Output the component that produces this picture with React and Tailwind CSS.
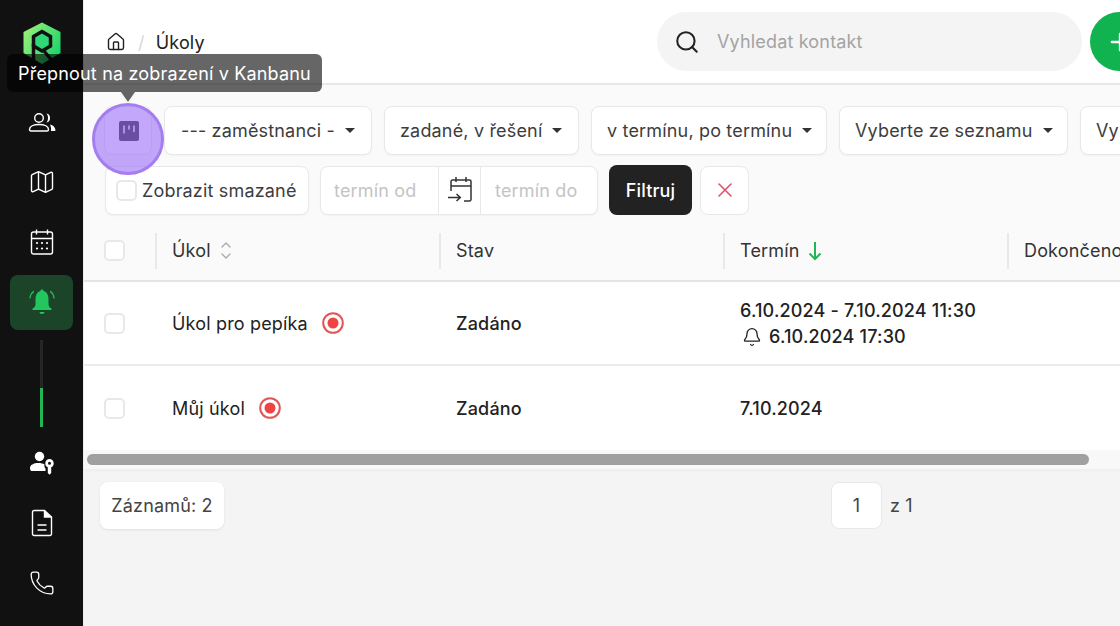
import React from 'react';
import { ChevronDown, ChevronUp, X, Search, Map as MapIcon, Phone, Bell, House, Plus } from 'lucide-react';

const Slot = ({ children }) => <div className="h-[60px] flex items-center justify-center text-white shrink-0">{children}</div>;

const Logo = () => (
  <svg width="38" height="44" viewBox="0 0 38 44">
    <defs>
      <linearGradient id="lg" x1="0" y1="0" x2="1" y2="0.6">
        <stop offset="0" stopColor="#a8f27a" />
        <stop offset="1" stopColor="#22d56c" />
      </linearGradient>
    </defs>
    <path d="M19 0.500 L37.500 10 V31 L19 42 L.5 31 V10 Z" fill="url(#lg)" />
    <path d="M19 9.500 L27.500 14.500 V24 L19 29 L10.500 24 V14.500 Z" fill="#2ed877" stroke="#111" strokeWidth="3.500" />
    <path d="M10.500 22 V44 M21 29 L31 41" stroke="#111" strokeWidth="3.500" fill="none" />
  </svg>
);

const UsersIcon = () => (
  <svg width="28" height="24" viewBox="0 0 28 24" fill="none" stroke="currentColor" strokeWidth="1.400">
    <circle cx="11" cy="8" r="4.300" />
    <path d="M1.500 19.500c0-3 4-5 9.500-5s9.500 2 9.500 5c0 1-.5 1.500-1.500 1.500H3c-1 0-1.500-.5-1.500-1.500Z" />
    <path d="M18.500 3.500c2.500.3 3.500 2.200 3.500 4.500s-1 4.200-3.500 4.500c1-1 1.500-2.800 1.500-4.500s-.5-3.500-1.500-4.500Z" fill="currentColor" stroke="none" />
    <path d="M22 14.500c3 .5 5 2.500 5.500 5.500 0 .7-.4 1-1 1h-3.500c.3-2.500-.2-4.500-1-6.500Z" fill="currentColor" stroke="none" />
  </svg>
);

const CalendarIcon = () => (
  <svg width="24" height="28" viewBox="0 0 24 28" fill="none" stroke="currentColor" strokeWidth="1.400">
    <rect x="1.500" y="4" width="21" height="22" rx="2" />
    <path d="M1.500 10.500h21M6.500 1.500v5M17.500 1.500v5" />
    <g fill="currentColor" stroke="none">
      <circle cx="7" cy="15" r="1.100" /><circle cx="12" cy="15" r="1.100" /><circle cx="17" cy="15" r="1.100" />
      <circle cx="7" cy="20.500" r="1.100" /><circle cx="12" cy="20.500" r="1.100" /><circle cx="17" cy="20.500" r="1.100" />
    </g>
  </svg>
);

const BellActive = () => (
  <svg width="26" height="28" viewBox="0 0 26 28" fill="none">
    <path d="M13 1.500c1 0 1.600.7 1.700 1.500C18 4 19.500 7 19.500 11v5c0 2 1 3.500 3 4.500v1.500h-19v-1.500c2-1 3-2.500 3-4.500v-5c0-4 1.500-7 4.800-8 .1-.8.700-1.500 1.700-1.500Z" fill="#22c55e" />
    <path d="M10.500 24h5c0 1-1 2-2.500 2s-2.500-1-2.500-2Z" fill="#22c55e" />
    <path d="M1 10c.3-3 1.500-5 3.500-6.500M25 10c-.3-3-1.500-5-3.500-6.500" stroke="#22c55e" strokeWidth="1.200" strokeLinecap="round" />
  </svg>
);

const UserKey = () => (
  <svg width="26" height="24" viewBox="0 0 26 24" fill="currentColor">
    <circle cx="10.500" cy="5.500" r="4.700" />
    <path d="M1 17c0-3 3.500-5 8.500-5 2.500 0 4.500.5 6 1.500-.3 1.500 0 3 1 4V20H2.500C1.500 20 1 18.500 1 17Z" />
    <path fillRule="evenodd" d="M20.500 8a4.300 4.300 0 0 1 1.700 8.200V22l-1.700 1.700-1.700-1.700v-5.800A4.300 4.300 0 0 1 20.500 8Zm0 2.800a1.500 1.500 0 1 0 0 3 1.500 1.500 0 0 0 0-3Z" />
  </svg>
);

const DocIcon = () => (
  <svg width="22" height="28" viewBox="0 0 22 28" fill="none" stroke="currentColor" strokeWidth="1.400">
    <path d="M3 1.500h10.500L20.500 8v17a1.500 1.500 0 0 1-1.500 1.500H3A1.500 1.500 0 0 1 1.500 25V3A1.500 1.500 0 0 1 3 1.500Z" />
    <path d="M13.500 1.500V8h7" fill="currentColor" />
    <path d="M6.500 16h9M6.500 21h9" />
  </svg>
);

const KanbanIcon = () => (
  <svg width="20" height="20" viewBox="0 0 20 20">
    <rect width="20" height="20" rx="2" fill="#222" />
    <path d="M5 4.500v8M10 4.500v4M15 4.500v6.500" stroke="#fff" strokeWidth="1.500" />
  </svg>
);

const DateRangeIcon = () => (
  <svg width="26" height="28" viewBox="0 0 26 28" fill="none" stroke="#333" strokeWidth="1.500">
    <path d="M4 15V5.500A1.500 1.500 0 0 1 5.500 4h17A1.500 1.500 0 0 1 24 5.500V23.500A1.500 1.500 0 0 1 22.500 25H17" />
    <path d="M4 10h20M9 1v5M19 1v5" />
    <path d="M1 21.500h12M9.500 18l3.800 3.500-3.800 3.500" />
  </svg>
);

const SortArrow = () => (
  <svg width="14" height="20" viewBox="0 0 14 20" fill="none" stroke="#22b455" strokeWidth="2" className="shrink-0">
    <path d="M7 1v17M1.500 12.500 7 18l5.500-5.500" />
  </svg>
);

const Caret = () => <span className="w-0 h-0 border-x-[5.500px] border-x-transparent border-t-[5.500px] border-t-[#333] shrink-0" />;

const Select = ({ label, className }) => (
  <div className={`h-[49px] bg-white border border-[#e8e8e8] rounded-lg flex items-center gap-[10px] shrink-0 shadow-[0_1px_2px_rgba(0,0,0,0.04)] ${className}`}>
    <span className="whitespace-nowrap">{label}</span>
    <Caret />
  </div>
);

const Checkbox = ({ className = '' }) => <span className={`block w-[21px] h-[21px] rounded-[5px] border-2 border-[#e8e8e8] bg-white shrink-0 ${className}`} />;

const Target = () => (
  <svg width="22" height="22" viewBox="0 0 22 22" className="shrink-0">
    <circle cx="11" cy="11" r="9.800" fill="#fff" stroke="#e25555" strokeWidth="2" />
    <circle cx="11" cy="11" r="5.500" fill="#ef4444" />
  </svg>
);

const HeadCell = ({ children }) => (
  <div className="relative h-[36px] flex items-center gap-2 pl-4 text-[#333]">
    <span className="absolute left-[-1px] top-0 bottom-0 w-[2px] bg-[#e9e9e9]" />
    {children}
  </div>
);

const grid = 'grid grid-cols-[72px_284px_284px_284px_1fr] items-center';

export default function App() {
  return (
    <div className="relative w-[1120px] h-[626px] overflow-hidden flex bg-[#f4f4f4] text-[18px] tracking-[0.17px] text-[#222] font-['Inter','Liberation_Sans',sans-serif]">
      <aside className="w-[84px] shrink-0 bg-[#111] border-r border-[#ececec] flex flex-col">
        <div className="h-[92px] pt-[22px] flex justify-center shrink-0"><Logo /></div>
        <Slot><UsersIcon /></Slot>
        <Slot><MapIcon size={28} strokeWidth={1.200} /></Slot>
        <Slot><CalendarIcon /></Slot>
        <div className="h-[60px] flex items-center justify-center shrink-0">
          <div className="w-[63px] h-[55px] rounded-lg bg-[#1c4428] flex items-center justify-center"><BellActive /></div>
        </div>
        <div className="h-[101px] flex justify-center pt-[8px] shrink-0">
          <div className="w-[3px] h-[87px] bg-[#262626] flex flex-col justify-end"><div className="h-[39px] bg-[#22b455]" /></div>
        </div>
        <Slot><UserKey /></Slot>
        <Slot><DocIcon /></Slot>
        <Slot><Phone size={26} strokeWidth={1.200} /></Slot>
      </aside>

      <main className="flex-1 min-w-0 overflow-hidden flex flex-col">
        <header className="h-[85px] shrink-0 bg-white border-b-2 border-[#e8e8e8] flex items-start pl-[22px] pt-[12px]">
          <div className="w-[551px] h-[59px] shrink-0 flex items-center pt-[1px]">
            <House size={20} strokeWidth={1.700} className="text-[#222]" />
            <span className="ml-[12px] text-[#d8d8d8]">/</span>
            <span className="ml-[11px]">Úkoly</span>
          </div>
          <div className="w-[425px] h-[59px] shrink-0 rounded-full bg-[#f4f4f4] flex items-center pl-[17px]">
            <Search size={26} strokeWidth={1.900} className="text-[#222]" />
            <span className="ml-[17px] text-[#a3a3a3]">Vyhledat kontakt</span>
          </div>
          <div className="ml-2 w-[60px] h-[59px] shrink-0 rounded-full bg-[#10b34f] flex items-center justify-center text-white">
            <Plus size={28} strokeWidth={2} />
          </div>
        </header>

        <section className="h-[138px] shrink-0 bg-[#fafafa] pl-[20px] pt-[21px] text-[#3d3d3d]">
          <div className="flex gap-3">
            <div className="w-[48px] h-[49px] shrink-0 rounded-lg border border-[#e8e8e8] bg-white flex items-center justify-center"><span className="flex ml-[1px] mt-[1px]"><KanbanIcon /></span></div>
            <Select label="--- zaměstnanci -" className="w-[208px] pl-4" />
            <Select label="zadané, v řešení" className="w-[195px] pl-[15px]" />
            <Select label="v termínu, po termínu" className="w-[236px] pl-[15px]" />
            <Select label="Vyberte ze seznamu" className="w-[229px] pl-[15px]" />
            <Select label="Vyberte ze seznamu" className="w-[229px] pl-[15px]" />
          </div>
          <div className="flex items-center mt-[10px]">
            <label className="ml-[1px] w-[204px] h-[49px] shrink-0 bg-white border border-[#e8e8e8] rounded-lg flex items-center gap-[5px] pl-[10px] shadow-[0_1px_2px_rgba(0,0,0,0.04)]">
              <Checkbox />
              <span className="whitespace-nowrap">Zobrazit smazané</span>
            </label>
            <div className="ml-[11px] w-[278px] h-[49px] shrink-0 bg-white border border-[#e8e8e8] rounded-lg flex items-center text-[#c4c4c4] shadow-[0_1px_2px_rgba(0,0,0,0.04)]">
              <span className="w-[117px] pl-[13px]">termín od</span>
              <span className="w-[43px] h-full flex items-center justify-center border-x border-[#e8e8e8]"><DateRangeIcon /></span>
              <span className="pl-[14px]">termín do</span>
            </div>
            <button className="ml-[11px] w-[83px] h-[50px] shrink-0 rounded-lg bg-[#222] text-white font-medium">Filtruj</button>
            <button className="ml-[8px] w-[49px] h-[49px] shrink-0 rounded-lg border border-[#e8e8e8] bg-white flex items-center justify-center text-[#e0506c]"><X size={24} strokeWidth={1.600} /></button>
          </div>
        </section>

        <div className={`${grid} h-[59px] shrink-0 bg-[#fafafa] border-b-2 border-[#e4e4e4] pb-[2px]`}>
          <div className="pl-5"><Checkbox /></div>
          <HeadCell>Úkol
            <span className="flex flex-col text-[#aaa] -ml-[1px]">
              <ChevronUp size={16} strokeWidth={2} className="-mb-[5px]" />
              <ChevronDown size={16} strokeWidth={2} />
            </span>
          </HeadCell>
          <HeadCell>Stav</HeadCell>
          <HeadCell>Termín <SortArrow /></HeadCell>
          <HeadCell><span className="whitespace-nowrap">Dokončeno</span></HeadCell>
        </div>

        <div className={`${grid} h-[84px] shrink-0 bg-white border-b-2 border-[#ececec]`}>
          <div className="pl-5"><Checkbox /></div>
          <div className="pl-4 flex items-center gap-[14px]">Úkol pro pepíka <Target /></div>
          <div className="pl-4 font-medium">Zadáno</div>
          <div className="pl-4 pt-[1px] font-medium leading-[26px]">
            <div className="whitespace-nowrap">6.10.2024 - 7.10.2024 11:30</div>
            <div className="flex items-center gap-[7px] whitespace-nowrap"><Bell size={20} strokeWidth={1.600} className="ml-[2px]" />6.10.2024 17:30</div>
          </div>
          <div />
        </div>
        <div className={`${grid} h-[84px] shrink-0 bg-white`}>
          <div className="pl-5"><Checkbox /></div>
          <div className="pl-4 flex items-center gap-[14px]">Můj úkol <Target /></div>
          <div className="pl-4 font-medium">Zadáno</div>
          <div className="pl-4 font-medium">7.10.2024</div>
          <div />
        </div>

        <div className="h-[19px] shrink-0 bg-[#f8f8f8] pl-[3px] pt-[4px] shadow-[0_2px_4px_rgba(0,0,0,0.03)]">
          <div className="w-[1002px] h-[11px] rounded-full bg-[#a0a0a0]" />
        </div>

        <footer className="flex items-start pl-[16px] pt-[13px] text-[#444]">
          <div className="w-[124px] h-[47px] shrink-0 rounded-lg bg-white flex items-center justify-center shadow-[0_1px_3px_rgba(0,0,0,0.08)]">Záznamů: 2</div>
          <div className="ml-[607px] w-[51px] h-[47px] shrink-0 rounded-lg bg-white border border-[#e8e8e8] flex items-center justify-center">1</div>
          <div className="ml-[8px] h-[47px] flex items-center whitespace-nowrap">z 1</div>
        </footer>
      </main>

      <div className="absolute left-[7px] top-[54px] w-[315px] h-[38px] rounded-md bg-black/60 text-white flex items-center justify-center whitespace-nowrap z-10">Přepnout na zobrazení v Kanbanu</div>
      <div className="absolute left-[121px] top-[92px] w-0 h-0 border-x-[7px] border-x-transparent border-t-[10px] border-t-black/60 z-10" />
      <div className="absolute left-[92px] top-[103px] w-[72px] h-[72px] rounded-full bg-[#996df9]/60 border-[3px] border-[#a47ef0] z-20" />
    </div>
  );
}
